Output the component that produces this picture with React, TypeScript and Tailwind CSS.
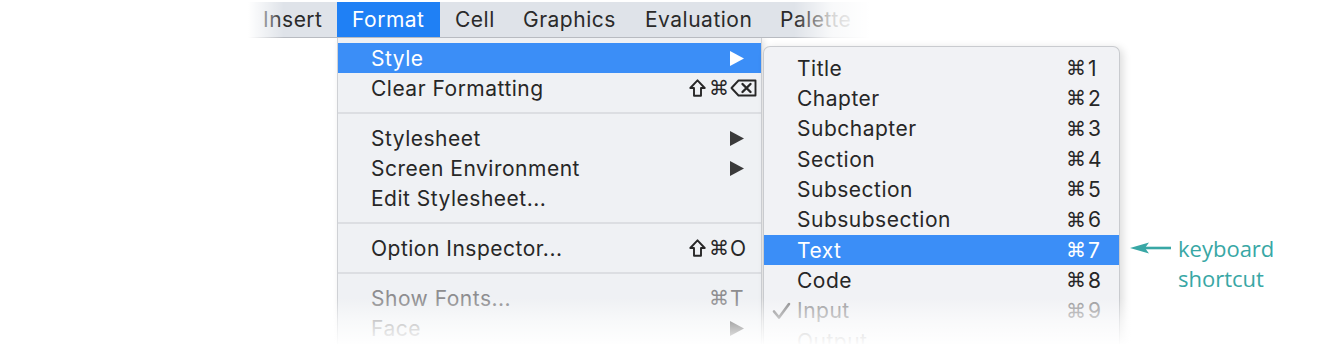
import React from 'react';

type Item =
  | { sep: true }
  | {
      sep?: false;
      label: string;
      shift?: boolean;
      cmd?: boolean;
      keyName?: string;
      arrow?: boolean;
      active?: boolean;
      disabled?: boolean;
      check?: boolean;
    };

const formatItems: Item[] = [
  { label: 'Style', arrow: true, active: true },
  { label: 'Clear Formatting', shift: true, cmd: true, keyName: 'del' },
  { sep: true },
  { label: 'Stylesheet', arrow: true },
  { label: 'Screen Environment', arrow: true },
  { label: 'Edit Stylesheet...' },
  { sep: true },
  { label: 'Option Inspector...', shift: true, cmd: true, keyName: 'O' },
  { sep: true },
  { label: 'Show Fonts...', cmd: true, keyName: 'T', disabled: true },
  { label: 'Face', arrow: true, disabled: true },
];

const styleItems: Item[] = [
  { label: 'Title', cmd: true, keyName: '1' },
  { label: 'Chapter', cmd: true, keyName: '2' },
  { label: 'Subchapter', cmd: true, keyName: '3' },
  { label: 'Section', cmd: true, keyName: '4' },
  { label: 'Subsection', cmd: true, keyName: '5' },
  { label: 'Subsubsection', cmd: true, keyName: '6' },
  { label: 'Text', cmd: true, keyName: '7', active: true },
  { label: 'Code', cmd: true, keyName: '8' },
  { label: 'Input', cmd: true, keyName: '9', disabled: true, check: true },
  { label: 'Output', disabled: true },
];

const barItems = [
  { label: 'Insert', w: 'w-[89px]' },
  { label: 'Format', w: 'w-[103px]', active: true },
  { label: 'Cell', w: 'w-[68px]' },
  { label: 'Graphics', w: 'w-[122px]' },
  { label: 'Evaluation', w: 'w-[135px]' },
  { label: 'Palette', w: 'w-[105px]' },
];

const Arrow = ({ white }: { white?: boolean }) => (
  <svg width="14" height="15" viewBox="0 0 14 15" className="block">
    <polygon points="0,0 14,7.5 0,15" fill={white ? '#ffffff' : '#3a3a3a'} />
  </svg>
);

const ShiftKey = () => (
  <svg width="17" height="18" viewBox="0 0 17 18" className="block">
    <path d="M8.5 1.3 L15.7 9 H12 V16.7 H5 V9 H1.3 Z" fill="none" stroke="currentColor" strokeWidth="1.9" strokeLinejoin="round" />
  </svg>
);

const DeleteKey = () => (
  <svg width="27" height="18" viewBox="0 0 27 18" className="block">
    <path d="M8.5 1.5 H25.5 V16.5 H8.5 L1.5 9 Z" fill="none" stroke="currentColor" strokeWidth="1.9" strokeLinejoin="round" />
    <path d="M12.5 5 L20.5 13 M20.5 5 L12.5 13" stroke="currentColor" strokeWidth="2.4" strokeLinecap="round" />
  </svg>
);

const CheckMark = () => (
  <svg width="19" height="18" viewBox="0 0 19 18" className="block">
    <path d="M2 9.5 L7 15.5 L17 2" fill="none" stroke="#8a8a8c" strokeWidth="2.6" strokeLinecap="round" strokeLinejoin="round" />
  </svg>
);

const keyFont = { fontFamily: '"DejaVu Sans", sans-serif' };

const FormatMenu = () => (
  <div className="w-[425px] h-[307px] bg-[#eff1f4] border-l border-r border-[#cfd1d5] pt-[6px] shadow-[2px_2px_6px_rgba(0,0,0,0.12)]">
    {formatItems.map((it, i) =>
      it.sep ? (
        <div key={i} className="h-[20px] flex items-center">
          <div className="h-[2px] w-full bg-[#dcdee2]" />
        </div>
      ) : (
        <div
          key={i}
          className={`h-[30px] flex items-center pl-[33px] pr-[3px] ${
            it.active ? 'bg-[#3b8ef7] text-white' : it.disabled ? 'text-[#8d8d8f]' : 'text-[#272727]'
          }`}
        >
          <span className="flex-1">{it.label}</span>
          <span className="w-[70px] flex items-center justify-end gap-[3px]">
            {it.shift && <ShiftKey />}
            {it.cmd && (
              <span className="text-[20px] leading-none tracking-normal" style={keyFont}>
                ⌘
              </span>
            )}
          </span>
          <span className="w-[28px] ml-[1px] flex items-center">
            {it.arrow ? <Arrow white={it.active} /> : it.keyName === 'del' ? <DeleteKey /> : it.keyName}
          </span>
        </div>
      )
    )}
  </div>
);

const StyleMenu = () => (
  <div className="mt-[9px] ml-[1px] w-[357px] h-[300px] bg-[#f1f2f5] border border-b-0 border-[#c9cbcf] rounded-t-[7px] pt-[6px] shadow-[3px_2px_8px_rgba(0,0,0,0.14)]">
    {styleItems.map((it, i) =>
      it.sep ? null : (
        <div
          key={i}
          className={`h-[30.33px] flex items-center pl-[8px] pr-[13px] ${
            it.active ? 'bg-[#3b8ef7] text-white' : it.disabled ? 'text-[#99999b]' : 'text-[#272727]'
          }`}
        >
          <span className="w-[25px] flex items-center">{it.check && <CheckMark />}</span>
          <span className="flex-1">{it.label}</span>
          {it.cmd && (
            <span className="text-[20px] tracking-normal" style={keyFont}>
              ⌘
            </span>
          )}
          <span className="w-[18px] ml-[2px]">{it.keyName}</span>
        </div>
      )
    )}
  </div>
);

export default function App() {
  return (
    <div
      className="relative w-[1340px] h-[344px] overflow-hidden bg-white text-[21px] tracking-[0.5px] leading-none"
      style={{ fontFamily: 'Inter, "Liberation Sans", sans-serif' }}
    >
      {/* menu bar */}
      <div className="pt-[2px] pl-[248px]">
        <div className="relative flex w-[622px] h-[35px] bg-[#dfe3e9] shadow-[0_1px_0_#b8bbc1]">
          {barItems.map((b) => (
            <div
              key={b.label}
              className={`${b.w} h-full flex items-center pl-[15px] ${
                b.active ? 'bg-[#1f80f5] text-white' : 'text-[#2a2a2a]'
              }`}
            >
              {b.label}
            </div>
          ))}
          <div className="absolute left-0 top-0 h-[37px] w-[36px] bg-gradient-to-r from-white to-white/0" />
          <div className="absolute right-0 top-0 h-[37px] w-[76px] bg-gradient-to-l from-white via-white/80 to-white/0" />
        </div>
      </div>

      {/* menus */}
      <div className="flex pl-[337px]">
        <FormatMenu />
        <StyleMenu />
        <div
          className="flex items-start ml-[10px] mt-[196px] text-[#38a7a5] tracking-normal"
          style={{ fontFamily: '"Open Sans", sans-serif' }}
        >
          <svg width="42" height="30" viewBox="0 0 42 30" className="block">
            <polygon points="0,15 19,9.5 15,15 19,20.5" fill="#38a7a5" />
            <rect x="15" y="13.7" width="26" height="2.6" fill="#38a7a5" />
          </svg>
          <div className="ml-[6px] leading-[30px] text-[22px]">
            <div>keyboard</div>
            <div>shortcut</div>
          </div>
        </div>
      </div>

      {/* bottom fade */}
      <div className="absolute left-[320px] w-[820px] bottom-0 h-[46px] bg-gradient-to-b from-white/0 via-white/55 to-white/95" />
    </div>
  );
}
